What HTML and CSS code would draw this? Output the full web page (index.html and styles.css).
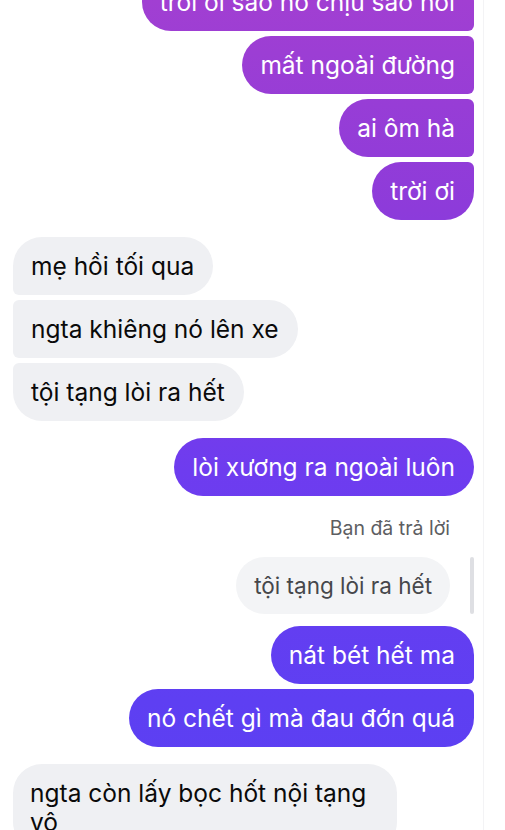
FILE: index.html
```html
<!DOCTYPE html>
<html lang="vi">
<head>
<meta charset="utf-8">
<link rel="stylesheet" href="styles.css">
</head>
<body>
<div class="chat">
  <div class="group out">
    <div class="bubble first">trời ơi sao nó chịu sao nổi</div>
    <div class="bubble mid">mất ngoài đường</div>
    <div class="bubble mid">ai ôm hà</div>
    <div class="bubble last">trời ơi</div>
  </div>
  <div class="group in">
    <div class="bubble first">mẹ hồi tối qua</div>
    <div class="bubble mid">ngta khiêng nó lên xe</div>
    <div class="bubble last">tội tạng lòi ra hết</div>
  </div>
  <div class="group out">
    <div class="bubble single">lòi xương ra ngoài luôn</div>
  </div>
  <div class="reply">
    <div class="reply-label">Bạn đã trả lời</div>
    <div class="reply-row">
      <div class="quote">tội tạng lòi ra hết</div>
      <div class="quote-bar"></div>
    </div>
  </div>
  <div class="group out tight">
    <div class="bubble first">nát bét hết ma</div>
    <div class="bubble last">nó chết gì mà đau đớn quá</div>
  </div>
  <div class="group in last-in">
    <div class="bubble first wide">ngta còn lấy bọc hốt nội tạng vô</div>
  </div>
</div>
</body>
</html>
```
FILE: styles.css
```css
html, body {
  margin: 0;
  padding: 0;
  background: #ffffff;
  height: 830px;
  overflow: hidden;
}
body {
  font-family: "Inter", "Roboto", "Noto Sans", sans-serif;
  -webkit-font-smoothing: antialiased;
}
.chat {
  width: 484px;
  border-right: 1px solid #f3f3f5;
  box-sizing: border-box;
  margin-top: -27px;
  padding: 0 9px 0 13px;
  display: flex;
  flex-direction: column;
  min-height: 900px;
}
.group {
  display: flex;
  flex-direction: column;
  gap: 5px;
}
.group.out {
  align-items: flex-end;
}
.group.in {
  align-items: flex-start;
}
.bubble {
  box-sizing: border-box;
  font-size: 24.5px;
  line-height: 29px;
  padding: 15px 19px 14px 18px;
  border-radius: 29px;
  max-width: 384px;
}
.out .bubble {
  color: #ffffff;
  background: linear-gradient(180deg, #a13fd2 0px, #8d3bda 210px, #6e3cef 470px, #5e3ff2 700px, #5a40f3 830px);
  background-attachment: fixed;
}
.out .first { border-bottom-right-radius: 6px; }
.out .mid { border-top-right-radius: 6px; border-bottom-right-radius: 6px; }
.out .last { border-top-right-radius: 6px; }
.in .bubble {
  color: #0a0a0a;
  background: #eff0f3;
}
.in .first { border-bottom-left-radius: 6px; }
.in .mid { border-top-left-radius: 6px; border-bottom-left-radius: 6px; }
.in .last { border-top-left-radius: 6px; }
.in .wide { border-bottom-left-radius: 29px; padding-left: 17px; }
.group.out + .group.in { margin-top: 17px; }
.group.in + .group.out { margin-top: 17px; }
.group.last-in { margin-top: 19px; }
.reply {
  display: flex;
  flex-direction: column;
  align-items: flex-end;
  margin-top: 20px;
}
.reply-label {
  font-size: 19.5px;
  line-height: 24px;
  color: #5d5e62;
  padding-right: 24px;
}
.reply-row {
  display: flex;
  align-items: stretch;
  gap: 20px;
  margin-top: 17px;
}
.quote {
  font-size: 22.5px;
  line-height: 29px;
  color: #46474b;
  background: #f3f4f6;
  border-radius: 29px;
  padding: 14px 18px 14px 18px;
}
.quote-bar {
  width: 4px;
  background: #dedfe3;
  border-radius: 2px;
}
.group.tight { margin-top: 12px; }
```
